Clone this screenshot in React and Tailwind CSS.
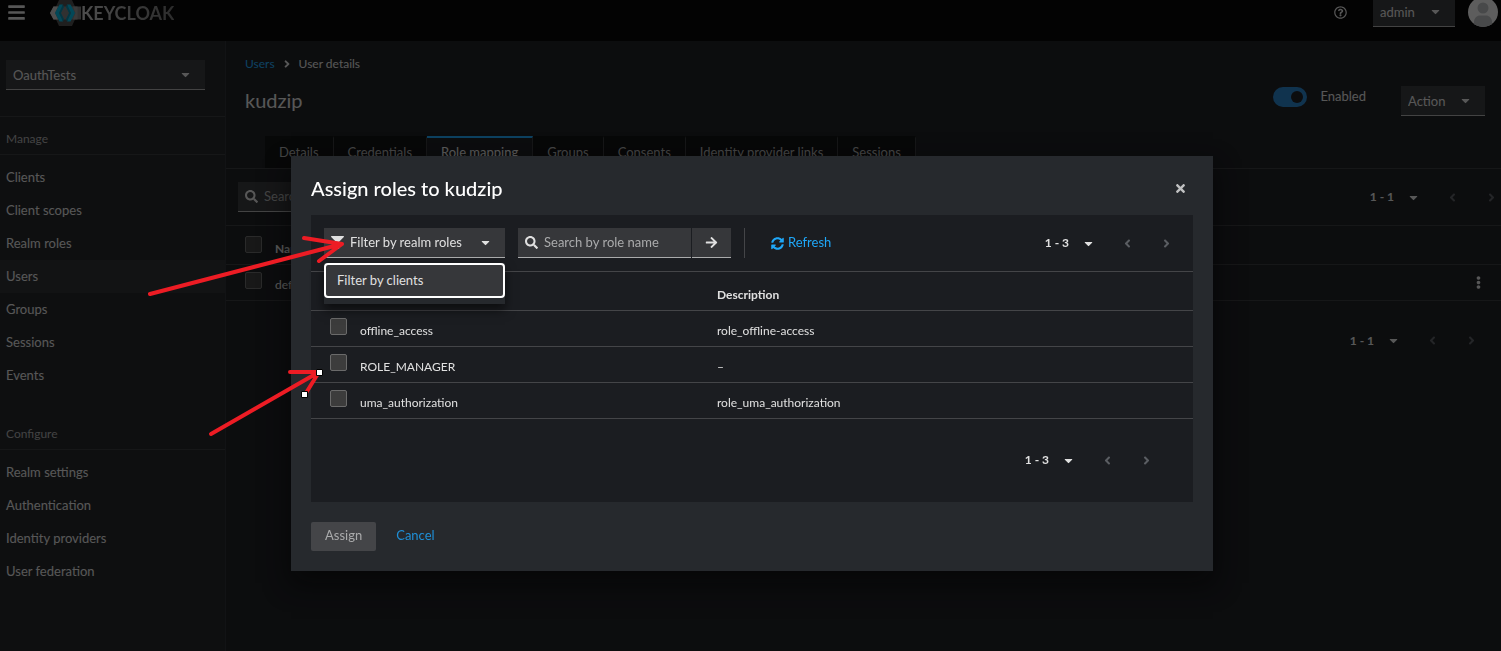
import React from 'react';
import {
  FaAngleLeft,
  FaAngleRight,
  FaArrowRight,
  FaBars,
  FaCaretDown,
  FaEllipsisV,
  FaFilter,
  FaRegQuestionCircle,
  FaSearch,
  FaSyncAlt,
  FaTimes,
} from 'react-icons/fa';

const MANAGE = ['Clients', 'Client scopes', 'Realm roles', 'Users', 'Groups', 'Sessions', 'Events'];
const CONFIGURE = ['Realm settings', 'Authentication', 'Identity providers', 'User federation'];

const TABS = [
  'Details',
  'Credentials',
  'Role mapping',
  'Groups',
  'Consents',
  'Identity provider links',
  'Sessions',
];

const ROLES = [
  ['offline_access', 'role_offline-access'],
  ['ROLE_MANAGER', '–'],
  ['uma_authorization', 'role_uma_authorization'],
];

const Logo = () => (
  <a href="#home" className="flex items-center pt-px" aria-label="Keycloak">
    <svg width="31" height="28" viewBox="0 0 31 28" aria-hidden="true">
      <path d="M9 1h13l6 13-6 13H9L3 14z" fill="#4d4d4d" />
      <path d="M3.500 7.500H31v13H3.500L0 14z" fill="#7c7c7c" />
      <path d="M3.500 7.500H8L5 14l3 6.500H3.500L0 14z" fill="#c8c8c8" />
      <path d="M23 7.500h4.500v13H23l2.500-6.500z" fill="#949494" />
      <path d="M9.500 5.500h3.500L9 14l4 8.500H9.500L5 14z" fill="#00b8e3" />
      <path d="M13 5.500L14 8l-3 6 3 6-1 2.500L9 14z" fill="#008aaa" />
      <path d="M17 5.500h3.500L25 14l-4.500 8.500H17L21 14z" fill="#00b8e3" />
      <path d="M17 5.500L16 8l3 6-3 6 1 2.500L21 14z" fill="#008aaa" />
    </svg>
    <span className="bg-gradient-to-r from-[#c8c8c8] to-[#707070] bg-clip-text text-lg font-bold text-transparent">
      KEYCLOAK
    </span>
  </a>
);

/* Closed drop-down: a native select with its own caret drawn on top. */
const Dropdown = ({ label, value, className }) => (
  <div className={`relative h-[30px] border-b border-[#aaabac] bg-[#36373a] ${className}`}>
    <select
      aria-label={label}
      className="h-full w-full appearance-none bg-transparent pt-[2px] pl-[7px] pr-8 outline-none"
    >
      <option>{value}</option>
    </select>
    <FaCaretDown className="pointer-events-none absolute top-2 right-[13px] size-[13px]" />
  </div>
);

const Checkbox = ({ label }) => (
  <input
    type="checkbox"
    aria-label={label}
    className="block size-[17px] appearance-none rounded-xs border border-[#6a6a6a] bg-[#3c3c3c]"
  />
);

const Pagination = ({ range }) => (
  <div className="ml-auto flex items-center">
    <button type="button" className="flex items-center gap-[13px] text-xs font-bold">
      {range}
      <FaCaretDown className="size-[13px]" />
    </button>
    <button type="button" disabled aria-label="Previous" className="ml-[26px] text-[#5a5d62]">
      <FaAngleLeft className="size-[13px]" />
    </button>
    <button type="button" disabled aria-label="Next" className="ml-[26px] text-[#5a5d62]">
      <FaAngleRight className="size-[13px]" />
    </button>
  </div>
);

const NavSection = ({ title, items, className }) => (
  <section className={className}>
    <h2 className="border-b border-[#36373a] pt-[11px] pb-1 pl-[6px] text-xs leading-[22px] text-[#aaabac]">
      {title}
    </h2>
    <ul className="pt-[6px]">
      {items.map((item) => (
        <li key={item}>
          <a
            href="#nav"
            className={`block pl-[6px] leading-[33px] ${item === 'Users' ? 'bg-[#2b2d31]' : ''}`}
          >
            {item}
          </a>
        </li>
      ))}
    </ul>
  </section>
);

const Header = () => (
  <header className="flex h-[41px] items-center overflow-hidden bg-[#030303] pr-[3px] pb-[17px] pl-[7px]">
    <button type="button" aria-label="Global navigation" className="mr-6">
      <FaBars className="size-[19px]" />
    </button>
    <Logo />
    <button type="button" aria-label="Help" className="mr-[26px] ml-auto">
      <FaRegQuestionCircle className="size-[13px]" />
    </button>
    <Dropdown label="Account" value="admin" className="w-[82px]" />
    <svg className="ml-[13px] shrink-0" width="30" height="30" viewBox="0 0 30 30" aria-hidden="true">
      <clipPath id="avatar">
        <circle cx="15" cy="15" r="15" />
      </clipPath>
      <g clipPath="url(#avatar)">
        <path d="M0 0h30v30H0z" fill="#f0f0f0" />
        <circle cx="15" cy="11" r="5.500" fill="#b8bbbe" />
        <path d="M6 30v-5c0-4 3-6.500 6-6.500h6c3 0 6 2.500 6 6.500v5z" fill="#b8bbbe" />
      </g>
    </svg>
  </header>
);

const Sidebar = () => (
  <nav className="w-[226px] shrink-0 border-r border-[#2c2e32] bg-[#212427]">
    <div className="border-b border-[#36373a] pt-[19px] pr-[20px] pb-[26px] pl-[6px]">
      <Dropdown label="Realm" value="OauthTests" className="w-full" />
    </div>
    <NavSection title="Manage" items={MANAGE} />
    <NavSection title="Configure" items={CONFIGURE} className="mt-5" />
  </nav>
);

const UserPage = () => (
  <main className="min-w-0 flex-1 bg-[#1b1d21]">
    <div className="flex items-start pt-3 pr-4 pl-[19px]">
      <div className="flex-1">
        <ol className="flex items-center text-xs leading-[22px]">
          <li>
            <a href="#users" className="text-[#1fa7f8]">
              Users
            </a>
          </li>
          <li className="flex items-center">
            <FaAngleRight className="mx-[6px] size-3" />
            User details
          </li>
        </ol>
        <h1 className="mt-[11px] mb-px text-xl leading-[28px]">kudzip</h1>
      </div>
      <label className="mt-[34px] flex items-center gap-[13px]">
        <input
          type="checkbox"
          role="switch"
          defaultChecked
          className="relative h-5 w-[34px] appearance-none rounded-full bg-[#2b9af3]/80 before:absolute before:top-1 before:right-1 before:size-3 before:rounded-full before:bg-[#1b1d21]"
        />
        Enabled
      </label>
      <Dropdown label="Action" value="Action" className="mt-[33px] ml-[35px] w-[84px]" />
    </div>

    <div className="mt-5 flex h-[33px] border-b border-[#36373a] pl-[39px]">
      {TABS.map((tab) => (
        <button
          key={tab}
          type="button"
          className={`h-8 border-t-2 border-r border-r-[#36373a] px-[14px] ${
            tab === 'Role mapping'
              ? 'border-t-[#1fa7f8]'
              : 'border-t-transparent bg-[#0f1011] text-[#aaabac]'
          }`}
        >
          {tab}
        </button>
      ))}
    </div>

    <div className="flex h-[57px] items-center border-b border-[#36373a] pr-[3px] pl-3">
      <label className="flex h-[30px] w-[200px] items-center gap-[6px] border-b border-[#aaabac] bg-[#36373a] pl-[7px]">
        <FaSearch className="size-[13px] shrink-0" />
        <input
          type="search"
          aria-label="Search by name"
          placeholder="Search by name"
          className="w-full min-w-0 bg-transparent outline-none placeholder:text-[#aaabac]"
        />
      </label>
      <Pagination range="1 - 1" />
    </div>
    <table className="w-full table-fixed text-left text-xs">
      <thead>
        <tr className="h-[38px] border-b border-[#36373a]">
          <th className="w-[49px] pl-[19px]">
            <Checkbox label="Select all" />
          </th>
          <th className="w-[50px] pt-2">Name</th>
          <th />
        </tr>
      </thead>
      <tbody>
        <tr className="h-9 border-b border-[#36373a]">
          <td className="pb-1 pl-[19px]">
            <Checkbox label="Select row" />
          </td>
          <td className="pt-[6px]">default</td>
          <td className="pr-4 text-right">
            <button type="button" aria-label="Actions" className="align-middle">
              <FaEllipsisV className="size-[13px]" />
            </button>
          </td>
        </tr>
      </tbody>
    </table>
    <div className="mt-8 flex pr-[23px]">
      <Pagination range="1 - 1" />
    </div>
  </main>
);

const FilterMenu = () => (
  <div className="relative">
    <button
      type="button"
      aria-haspopup="menu"
      aria-expanded="true"
      className="flex h-[30px] w-[181px] items-center border-b border-[#aaabac] bg-[#36373a] pl-[7px]"
    >
      <FaFilter className="mr-[6px] size-[13px]" />
      Filter by realm roles
      <FaCaretDown className="mr-[13px] ml-auto size-[13px]" />
    </button>
    <div
      role="menu"
      className="absolute top-[35px] left-0 z-10 w-full bg-[#26292d] pb-[6px] shadow-[0_6px_10px_rgba(3,3,3,0.6)]"
    >
      <button
        type="button"
        role="menuitem"
        className="block h-[35px] w-full rounded-sm border-2 border-white bg-[#36373a] px-[11px] text-left"
      >
        Filter by clients
      </button>
    </div>
  </div>
);

/* Red pointers drawn over the dialog; the second one still shows its drag handles. */
const Arrows = () => (
  <svg
    className="pointer-events-none absolute top-0 left-0 z-20 overflow-visible"
    width="1"
    height="1"
    aria-hidden="true"
  >
    <g fill="none" stroke="#ed1c24" strokeWidth="4" strokeLinecap="round" strokeLinejoin="round">
      <path d="M-141 138L51 88M13 82L51 88L28 105" />
      <path d="M-80 278L28 216M-1 216H28L15 237" />
    </g>
    <g fill="#fff" stroke="#000">
      <path d="M25.500 213.500h6v6h-6zM10.500 235.500h6v6h-6z" />
    </g>
  </svg>
);

const AssignDialog = () => (
  <div
    role="dialog"
    aria-label="Assign roles to kudzip"
    className="relative w-full max-w-[922px] bg-[#26292d] px-5 pb-5 shadow-[0_12px_24px_rgba(3,3,3,0.6)]"
  >
    <div className="flex h-[59px] items-center justify-between pt-[6px] pr-[6px]">
      <h2 className="pb-[2px] text-xl font-medium text-white">Assign roles to kudzip</h2>
      <button type="button" aria-label="Close" className="text-[#c0c1c2]">
        <FaTimes className="size-[13px]" />
      </button>
    </div>

    <div className="bg-[#1b1d21]">
      <div className="flex h-[57px] items-center border-b border-[#444548] pr-5 pl-[13px]">
        <FilterMenu />
        <form className="ml-[13px] flex h-[30px] w-[213px]">
          <label className="flex min-w-0 flex-1 items-center gap-[6px] border-b border-[#aaabac] bg-[#36373a] pl-[7px]">
            <FaSearch className="size-[13px] shrink-0" />
            <input
              type="search"
              aria-label="Search by role name"
              placeholder="Search by role name"
              className="w-full min-w-0 bg-transparent outline-none placeholder:text-[#aaabac]"
            />
          </label>
          <button
            type="button"
            aria-label="Search"
            className="ml-px flex w-[39px] items-center justify-center border-b border-[#aaabac] bg-[#36373a]"
          >
            <FaArrowRight className="size-[13px]" />
          </button>
        </form>
        <div className="ml-[13px] h-[30px] w-px bg-[#444548]" />
        <button type="button" className="ml-[26px] flex items-center gap-1 text-[#1fa7f8]">
          <FaSyncAlt className="size-[13px]" />
          Refresh
        </button>
        <Pagination range="1 - 3" />
      </div>

      <table className="w-full table-fixed text-left text-xs">
        <thead>
          <tr className="h-[38px] border-b border-[#444548]">
            <th className="w-[49px]" />
            <th className="w-[357px]" />
            <th className="pt-2">Description</th>
          </tr>
        </thead>
        <tbody>
          {ROLES.map(([name, description]) => (
            <tr key={name} className="h-9 border-b border-[#444548]">
              <td className="pb-1 pl-[19px]">
                <Checkbox label={name} />
              </td>
              <td className="pt-[6px]">{name}</td>
              <td className="pt-[6px]">{description}</td>
            </tr>
          ))}
        </tbody>
      </table>
      <div className="flex h-[83px] items-center pr-10">
        <Pagination range="1 - 3" />
      </div>
    </div>

    <div className="mt-5 flex items-center gap-5">
      <button type="button" disabled className="h-[29px] rounded-xs bg-[#444548] px-[14px] text-[#aaabac]">
        Assign
      </button>
      <button type="button" className="text-[#1f8fd6]">
        Cancel
      </button>
    </div>
    <Arrows />
  </div>
);

export default function App() {
  return (
    <div className="flex min-h-screen flex-col bg-[#1b1d21] font-['Lato',sans-serif] text-[13px] text-[#e0e0e0]">
      <Header />
      <div className="flex flex-1">
        <Sidebar />
        <UserPage />
      </div>
      <div className="fixed inset-0 flex items-start justify-center bg-[#030303]/62 pt-[156px] pl-[3px]">
        <AssignDialog />
      </div>
    </div>
  );
}
